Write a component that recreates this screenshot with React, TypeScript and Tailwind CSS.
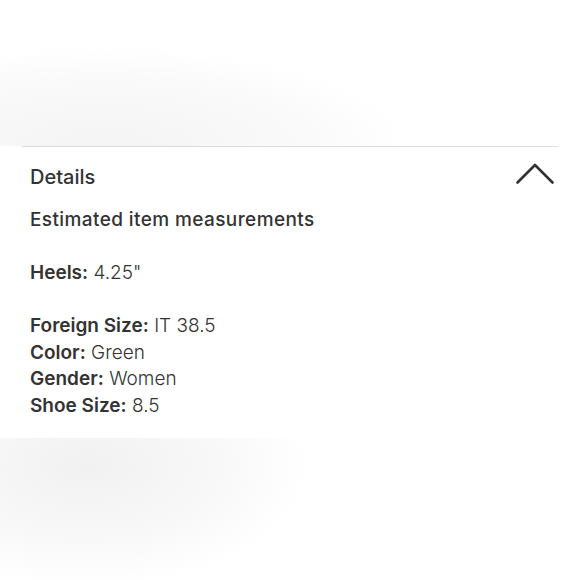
import React from 'react';

const rows: { label: string; value: string }[] = [
  { label: 'Foreign Size:', value: 'IT 38.5' },
  { label: 'Color:', value: 'Green' },
  { label: 'Gender:', value: 'Women' },
  { label: 'Shoe Size:', value: '8.5' },
];

export default function App() {
  return (
    <div className="w-[580px] h-[580px] overflow-hidden bg-white flex flex-col font-['Inter',sans-serif] text-[#333333]">
      {/* blurred photo backdrop above the panel */}
      <div className="h-[146px] shrink-0 bg-[radial-gradient(ellipse_65%_85%_at_18%_100%,#f4f4f4,#fafafa_55%,#ffffff_80%)]" />

      <div className="mx-[22px] border-t border-[#dcdcdc]">
        <div className="pl-[8px] pr-[4px] pt-[15px] flex justify-between">
          <h2 className="text-[20px] font-medium leading-[30px]">Details</h2>
          <svg width="38" height="24" viewBox="0 0 38 24" fill="none" className="mt-[1px]">
            <path d="M1.5 19.5 L19 2 L36.5 19.5" stroke="#333333" strokeWidth="2.6" strokeLinecap="round" strokeLinejoin="round" />
          </svg>
        </div>
        <div className="pl-[8px] pt-[15px] text-[19px] leading-[26.5px]">
          <p className="font-medium tracking-[0.4px]">Estimated item measurements</p>
          <p className="mt-[26.5px]">
            <span className="font-semibold">Heels:</span> <span className="font-light">4.25"</span>
          </p>
          <div className="mt-[26.5px]">
            {rows.map((r) => (
              <p key={r.label}>
                <span className="font-semibold">{r.label}</span> <span className="font-light">{r.value}</span>
              </p>
            ))}
          </div>
        </div>
      </div>

      <div className="mt-[19px] flex-1 bg-[radial-gradient(ellipse_45%_100%_at_15%_20%,#f1f1f1,#f8f8f8_50%,#ffffff_85%)]" />
    </div>
  );
}
